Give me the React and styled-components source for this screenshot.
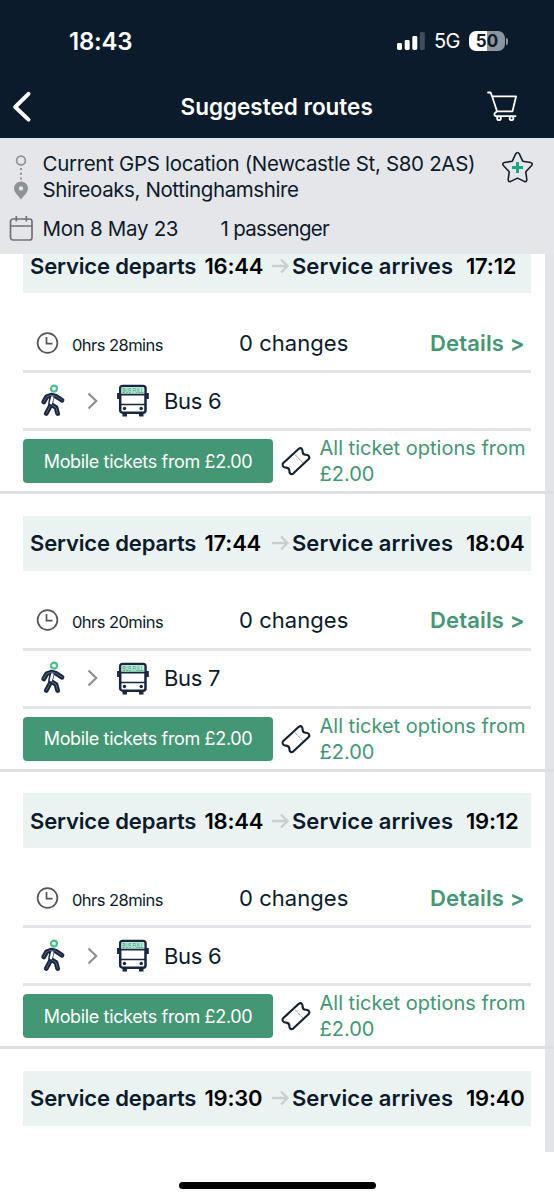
import React from "react";
import styled, { createGlobalStyle } from "styled-components";

const GlobalStyle = createGlobalStyle`
	* {
		box-sizing: border-box;
	}

	body {
		margin: 0;
		background-color: #fff;
		color: #0c1b2b;
		font-family: Inter, "Liberation Sans", sans-serif;
	}

	svg {
		display: block;
		flex-shrink: 0;
		overflow: visible;
	}
`;

const Screen = styled.div`
	width: 554px;
	height: 1200px;
	display: flex;
	flex-direction: column;
	overflow: hidden;
	background-color: #fff;
`;

const Header = styled.header`
	height: 138px;
	flex-shrink: 0;
	background-color: #0c1b2b;
	color: #fff;
`;

const StatusBar = styled.div`
	height: 76px;
	padding: 6px 46px 0 69px;
	display: flex;
	align-items: center;
	justify-content: space-between;
`;

const Clock = styled.div`
	font-size: 24px;
	font-weight: 600;
	letter-spacing: -0.2px;
`;

const StatusIcons = styled.div`
	display: flex;
	align-items: center;
`;

const Network = styled.span`
	width: 35px;
	margin-left: 9.5px;
	font-size: 20px;
	letter-spacing: -0.7px;
`;

const Battery = styled.div`
	width: 36px;
	height: 20px;
	border-radius: 7px;
	background: linear-gradient(90deg, #fff 50%, #8d949f 50%);
	color: #0c1b2b;
	font-size: 17px;
	font-weight: 700;
	line-height: 20px;
	text-align: center;
`;

const BatteryCap = styled.div`
	width: 2px;
	height: 7px;
	margin-left: 1px;
	border-radius: 0 3px 3px 0;
	background-color: #8d949f;
`;

const NavBar = styled.div`
	height: 61px;
	padding: 0 36px 0 12px;
	display: grid;
	grid-template-columns: 20px 1fr 31px;
	align-items: center;
`;

const Title = styled.h1`
	margin: 0;
	padding-left: 148.5px;
	font-size: 22.5px;
	font-weight: 600;
	white-space: nowrap;
`;

const Search = styled.section`
	height: 116px;
	flex-shrink: 0;
	padding: 13px 20px 0 8px;
	display: grid;
	grid-template-columns: 34.5px 1fr 33px;
	grid-template-rows: 53px 50px;
	background-color: #e5e6e9;
	font-size: 20.5px;
	line-height: 26px;
	white-space: nowrap;
`;

const Place = styled.div`
	letter-spacing: ${(props) => props.$spacing};
`;

const Trip = styled.div`
	display: flex;
	align-items: center;
	letter-spacing: -0.3px;
`;

const TripDate = styled.span`
	width: 178px;
`;

const Passengers = styled.span`
	letter-spacing: -0.7px;
`;

const RailIcon = styled.div`
	padding-top: 2px;
`;

const CalendarIcon = styled.div`
	padding-top: 11px;
`;

const Results = styled.main`
	height: 898px;
	flex-shrink: 0;
	overflow: hidden;
	background: linear-gradient(90deg, #fff 545.5px, #e3e4e8 545.5px);
`;

const List = styled.div`
	margin-top: -16px;
`;

/* the divider sits above the gap between two routes */
const Route = styled.article`
	height: 256px;
	margin-bottom: 21.5px;
	border-bottom: ${(props) => (props.$last ? "0" : "3px solid #dedfe3")};
	padding: 0 23px;
`;

const Times = styled.div`
	height: 55px;
	padding-left: 7px;
	display: grid;
	grid-template-columns: 174.5px 67px 20.5px 174px 1fr;
	align-items: center;
	background-color: #eaf2f2;
	font-size: 22px;
	font-weight: 600;
	white-space: nowrap;
`;

const Label = styled.span`
	letter-spacing: ${(props) => props.$spacing};
`;

const Time = styled.span`
	color: #000;
	letter-spacing: -0.2px;
`;

const Summary = styled.div`
	height: 80px;
	padding: 22px 0 0 13px;
	border-bottom: 3px solid #e4e5e9;
	display: grid;
	grid-template-columns: 36px 167px 191px 1fr;
	align-items: center;
	white-space: nowrap;
`;

const Duration = styled.span`
	padding-top: 4px;
	font-size: 16.5px;
	letter-spacing: -0.55px;
`;

const Changes = styled.span`
	font-size: 22px;
	letter-spacing: 0.05px;
`;

const Details = styled.span`
	color: #439775;
	font-size: 22px;
	font-weight: 600;
	letter-spacing: 0.15px;
`;

const Legs = styled.div`
	height: 58px;
	padding-left: 17px;
	border-bottom: 3px solid #e4e5e9;
	display: grid;
	grid-template-columns: 47px 30px 47px 1fr;
	align-items: center;
	font-size: 22px;
	letter-spacing: -0.3px;
`;

const Tickets = styled.div`
	padding-top: 4px;
	display: flex;
	align-items: center;
`;

const MobileButton = styled.button`
	width: 250px;
	height: 44px;
	border: 0;
	border-radius: 4px;
	padding: 0;
	background-color: #439775;
	color: #fff;
	font-family: inherit;
	font-size: 18px;
	letter-spacing: -0.35px;
	white-space: nowrap;
`;

const Options = styled.div`
	margin-left: 8.5px;
	color: #439775;
	font-size: 20px;
	line-height: 26px;
	white-space: nowrap;
`;

const TicketIcon = styled.svg`
	margin-left: 8px;
`;

const Footer = styled.footer`
	flex: 1;
	display: flex;
	justify-content: center;
	padding-top: 30px;
`;

const HomeBar = styled.div`
	width: 197px;
	height: 7px;
	border-radius: 4px;
	background-color: #000;
`;

const routes = [
	{ departs: "16:44", arrives: "17:12", duration: "0hrs 28mins", bus: "Bus 6" },
	{ departs: "17:44", arrives: "18:04", duration: "0hrs 20mins", bus: "Bus 7" },
	{ departs: "18:44", arrives: "19:12", duration: "0hrs 28mins", bus: "Bus 6" },
	{ departs: "19:30", arrives: "19:40" },
];

function Signal() {
	return (
		<svg width="28" height="18" viewBox="0 0 28 18" fill="#fff">
			<rect x="0" y="11" width="5" height="7" rx="1.4" />
			<rect x="7.7" y="8" width="5" height="10" rx="1.4" />
			<rect x="15.3" y="4" width="5" height="14" rx="1.4" />
			<rect x="22.8" y="0" width="5" height="18" rx="1.4" opacity="0.22" />
		</svg>
	);
}

function BackArrow() {
	return (
		<svg width="20" height="32" viewBox="0 0 20 32" fill="none">
			<path
				d="M16.5 2.8 3.2 16l13.3 12.6"
				stroke="#fff"
				strokeWidth="4"
				strokeLinecap="round"
				strokeLinejoin="round"
			/>
		</svg>
	);
}

function Cart() {
	return (
		<svg
			width="31"
			height="31"
			viewBox="0 0 31 31"
			fill="none"
			stroke="#fff"
			strokeWidth="1.8"
			strokeLinecap="round"
			strokeLinejoin="round">
			<path d="M1 1.5h2.6l1.5 3.8h24l-3.6 15H10L5.1 5.3M10 20.3 7.5 22.5v1.7l1 1h20" />
			<circle cx="12" cy="27.3" r="1.9" />
			<circle cx="24.5" cy="27.3" r="1.9" />
		</svg>
	);
}

function Rail() {
	return (
		<svg width="26" height="47" viewBox="0 0 26 47" fill="none">
			<circle cx="13" cy="7.5" r="4.4" stroke="#8d9399" strokeWidth="1.7" />
			<path d="M13 15v13" stroke="#8d9399" strokeWidth="2" strokeDasharray="2 2.7" />
			<path
				d="M13 28.5a7 7 0 0 0-7 7c0 4 4.5 7.5 7 11 2.5-3.5 7-7 7-11a7 7 0 0 0-7-7Zm0 4.7a2.2 2.2 0 1 1 0 4.4 2.2 2.2 0 0 1 0-4.4Z"
				fill="#8d9399"
			/>
		</svg>
	);
}

function Calendar() {
	return (
		<svg
			width="26"
			height="27"
			viewBox="0 0 26 27"
			fill="none"
			stroke="#6d7278"
			strokeWidth="1.7">
			<rect x="2.5" y="4" width="21.5" height="21" rx="2.5" />
			<path d="M2.5 11H24M8.3 1v5.5M18.3 1v5.5" />
		</svg>
	);
}

function Star() {
	return (
		<svg width="33" height="33" viewBox="0 0 33 33" fill="none">
			<path
				d="M14.8 2.7q1.7-2.4 3.4 0l3.5 7.5 7.9 1.3q2.7.8 1 3l-5.8 6.3 1 7.6q.1 3-2.5 2l-6.8-3.3-6.8 3.3q-2.6 1-2.5-2l1-7.6-5.8-6.3q-1.7-2.2 1-3l7.9-1.3Z"
				stroke="#14202e"
				strokeWidth="1.6"
				strokeLinejoin="round"
			/>
			<path d="M16.5 11v11M11 16.5h11" stroke="#1fa67a" strokeWidth="3" />
		</svg>
	);
}

function Arrow() {
	return (
		<svg width="18" height="18" viewBox="0 0 18 18" fill="none">
			<path d="M0 9h15.5M9 2.5 15.5 9 9 15.5" stroke="#cccdd0" strokeWidth="2.3" />
		</svg>
	);
}

function ClockIcon() {
	return (
		<svg
			width="24"
			height="24"
			viewBox="0 0 24 24"
			fill="none"
			stroke="#555557"
			strokeWidth="1.7">
			<circle cx="11.5" cy="12" r="9.9" />
			<path d="M10.5 6v6.7h6" />
		</svg>
	);
}

function Walker() {
	const limbs =
		"M3.7 18 6.7 12.7 11 11.2l4.5.8 6.5 4.2M12 12l-1.5 8 5.5 3.5 1.6 6M10 22.5l-3.7 7";

	return (
		<svg width="25" height="34" viewBox="0 0 25 34" fill="none">
			<circle cx="14" cy="4.6" r="3" stroke="#45c18a" strokeWidth="2.1" />
			<g strokeLinecap="round" strokeLinejoin="round">
				<path d={limbs} stroke="#192640" strokeWidth="4.8" />
				<path d={limbs} stroke="#6c778c" strokeWidth="0.8" />
				<path d="m12.3 13.5-1.3 5.5" stroke="#fff" strokeWidth="2.6" />
			</g>
		</svg>
	);
}

function Chevron() {
	return (
		<svg width="12" height="18" viewBox="0 0 12 18" fill="none">
			<path d="m1.5 1.5 7.7 7.5-7.7 7.5" stroke="#8f9092" strokeWidth="2.2" />
		</svg>
	);
}

function Bus() {
	return (
		<svg width="32" height="33" viewBox="0 0 32 33" fill="none">
			<rect x="3.2" y="2" width="25.3" height="26.7" rx="2.5" stroke="#192640" strokeWidth="2.5" />
			<rect x="4.5" y="3.3" width="22.7" height="6.7" fill="#c4eedb" />
			<text
				x="5.3"
				y="9"
				fill="#36ad7d"
				fontSize="6.3"
				fontWeight="600"
				letterSpacing="0"
				textLength="21"
				lengthAdjust="spacingAndGlyphs">
				BUS FULL
			</text>
			<path d="M3.5 10.7h25M3.5 20.5h25" stroke="#192640" strokeWidth="1.7" />
			<path
				d="M1.7 9v6M30.2 9v6M5.5 31H10M22 31h4.5"
				stroke="#192640"
				strokeWidth="3.2"
			/>
			<circle cx="7.5" cy="24.5" r="1.7" fill="#192640" />
			<circle cx="24.2" cy="24.5" r="1.7" fill="#192640" />
		</svg>
	);
}

function Ticket() {
	return (
		<TicketIcon width="30" height="30" viewBox="0 0 30 30" fill="none">
			<path
				d="M1.8 17.6 17.8 2.8q1.8-1.2 3 0 1 1.2.8 3 .2 2.6 3 3 2.3-.1 3.3 1.3 1 1.5-.2 2.9L12.2 27.6q-1.8 1.2-3 0-1-1.2-.8-3-.2-2.6-3-3-2.3.1-3.3-1.3-.9-1.4-.3-2.7Z"
				stroke="#14202e"
				strokeWidth="2.1"
				strokeLinejoin="round"
			/>
			<path d="m13 7.5 8.7 9.2" stroke="#555f6a" strokeDasharray="1 1" />
		</TicketIcon>
	);
}

function RouteCard({ route, last }) {
	return (
		<Route $last={last}>
			<Times>
				<Label $spacing="-0.15px">Service departs</Label>
				<Time>{route.departs}</Time>
				<Arrow />
				<Label $spacing="0.05px">Service arrives</Label>
				<Time>{route.arrives}</Time>
			</Times>
			{!last && (
				<>
					<Summary>
						<ClockIcon />
						<Duration>{route.duration}</Duration>
						<Changes>0 changes</Changes>
						<Details>Details &gt;</Details>
					</Summary>
					<Legs>
						<Walker />
						<Chevron />
						<Bus />
						<span>{route.bus}</span>
					</Legs>
					<Tickets>
						<MobileButton>Mobile tickets from £2.00</MobileButton>
						<Ticket />
						<Options>
							All ticket options from
							<br />
							£2.00
						</Options>
					</Tickets>
				</>
			)}
		</Route>
	);
}

export default function App() {
	return (
		<>
			<GlobalStyle />
			<Screen>
				<Header>
					<StatusBar>
						<Clock>18:43</Clock>
						<StatusIcons>
							<Signal />
							<Network>5G</Network>
							<Battery>50</Battery>
							<BatteryCap />
						</StatusIcons>
					</StatusBar>
					<NavBar>
						<BackArrow />
						<Title>Suggested routes</Title>
						<Cart />
					</NavBar>
				</Header>
				<Search>
					<RailIcon>
						<Rail />
					</RailIcon>
					<div>
						<Place $spacing="-0.32px">Current GPS location (Newcastle St, S80 2AS)</Place>
						<Place $spacing="-0.4px">Shireoaks, Nottinghamshire</Place>
					</div>
					<Star />
					<CalendarIcon>
						<Calendar />
					</CalendarIcon>
					<Trip>
						<TripDate>Mon 8 May 23</TripDate>
						<Passengers>1 passenger</Passengers>
					</Trip>
				</Search>
				<Results>
					<List>
						{routes.map((route, i) => (
							<RouteCard
								key={route.departs}
								route={route}
								last={i === routes.length - 1}
							/>
						))}
					</List>
				</Results>
				<Footer>
					<HomeBar />
				</Footer>
			</Screen>
		</>
	);
}
